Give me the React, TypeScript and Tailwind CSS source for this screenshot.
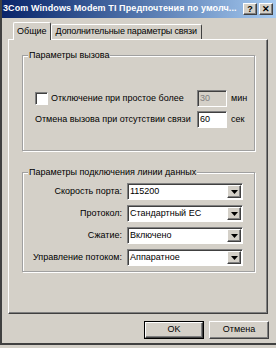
import React from "react";

const FONT = { fontFamily: '"Liberation Sans", Arial, sans-serif' };

const raised =
  "border border-t-white border-l-white border-r-[#404040] border-b-[#404040] shadow-[inset_-1px_-1px_0_#808080]";
const sunken =
  "border border-t-[#808080] border-l-[#808080] border-r-white border-b-white shadow-[inset_1px_1px_0_#404040]";

const TitleButton = ({ children }: { children: React.ReactNode }) => (
  <div
    className={`w-[14px] h-[12px] bg-[#d4d0c8] ${raised} flex items-center justify-center text-[9px] font-bold leading-none text-black`}
  >
    {children}
  </div>
);

const Group = ({ title, className, children }: { title: string; className: string; children: React.ReactNode }) => (
  <div className={`relative border border-[#a0a0a0] shadow-[inset_1px_1px_0_#fff,1px_1px_0_#fff] ${className}`}>
    <span className="absolute -top-[7px] left-[5px] bg-[#d4d0c8] px-[1px] leading-[12px] whitespace-nowrap">{title}</span>
    {children}
  </div>
);

const Combo = ({ value }: { value: string }) => (
  <div className={`w-[116px] h-[17px] bg-white ${sunken} flex items-center`}>
    <span className="flex-1 pl-[2px] leading-none whitespace-nowrap">{value}</span>
    <div className={`w-[14px] h-[13px] mr-[1px] bg-[#d4d0c8] ${raised} flex items-center justify-center`}>
      <svg width="7" height="4" viewBox="0 0 7 4">
        <path d="M0 0h7L3.5 4z" fill="#000" />
      </svg>
    </div>
  </div>
);

const App = () => {
  return (
    <div className="w-[276px] h-[348px] bg-[#d4d0c8] text-[9px] text-black overflow-hidden" style={FONT}>
      <div className="h-[345px] border-l-2 border-b-2 border-[#404040] flex flex-col">
        {/* Title bar */}
        <div className="h-[18px] flex items-center pl-[1px] pr-[3px] bg-gradient-to-r from-[#0a246a] to-[#a6caf0]">
          <span className="flex-1 font-bold text-white text-[9px] tracking-[0.1px] whitespace-nowrap">
            3Com Windows Modem TI Предпочтения по умолч...
          </span>
          <div className="flex gap-[2px]">
            <TitleButton>?</TitleButton>
            <TitleButton>✕</TitleButton>
          </div>
        </div>

        {/* Tabs */}
        <div className="flex items-end h-[21px] pl-[11px]">
          <div className="h-[18px] px-[3px] flex items-center border border-b-0 border-t-white border-l-white border-r-[#404040] bg-[#d4d0c8] relative z-10 -mb-[1px] rounded-t-[2px]">
            Общие
          </div>
          <div className="h-[15px] px-[4px] flex items-center border border-b-0 border-t-white border-l-white border-r-[#404040] rounded-t-[2px] whitespace-nowrap tracking-[-0.15px]">
            Дополнительные параметры связи
          </div>
        </div>

        {/* Panel */}
        <div className={`ml-[6px] w-[260px] h-[275px] ${raised} pt-[15px] pl-[13px]`}>
          <Group title="Параметры вызова" className="w-[233px] h-[96px] pt-[34px] pl-[12px]">
            <div className="flex items-center h-[17px] whitespace-nowrap">
              <div className={`w-[13px] h-[13px] bg-white ${sunken}`} />
              <span className="ml-[3px] w-[146px]">Отключение при простое более</span>
              <div className={`w-[30px] h-[17px] bg-[#d4d0c8] ${sunken} flex items-center pl-[2px] text-[#808080]`}>30</div>
              <span className="ml-[4px]">мин</span>
            </div>
            <div className="flex items-center h-[17px] mt-[4px] whitespace-nowrap">
              <span className="w-[162px]">Отмена вызова при отсутствии связи</span>
              <div className={`w-[30px] h-[17px] bg-white ${sunken} flex items-center pl-[2px]`}>60</div>
              <span className="ml-[4px]">сек</span>
            </div>
          </Group>

          <Group title="Параметры подключения линии данных" className="w-[233px] h-[100px] mt-[21px] pt-[10px] pl-[10px]">
            <div className="grid grid-cols-[89px_116px] gap-x-[5px] gap-y-[5px] items-center whitespace-nowrap">
              <span className="text-right">Скорость порта:</span>
              <Combo value="115200" />
              <span className="text-right">Протокол:</span>
              <Combo value="Стандартный EC" />
              <span className="text-right">Сжатие:</span>
              <Combo value="Включено" />
              <span className="text-right">Управление потоком:</span>
              <Combo value="Аппаратное" />
            </div>
          </Group>
        </div>

        {/* Buttons */}
        <div className="flex justify-end gap-[5px] pr-[7px] mt-[7px]">
          <div className="w-[60px] h-[18px] border border-black">
            <div className={`w-full h-full ${raised} flex items-center justify-center`}>OK</div>
          </div>
          <div className={`w-[60px] h-[18px] ${raised} flex items-center justify-center`}>Отмена</div>
        </div>
      </div>
    </div>
  );
};

export default App;
